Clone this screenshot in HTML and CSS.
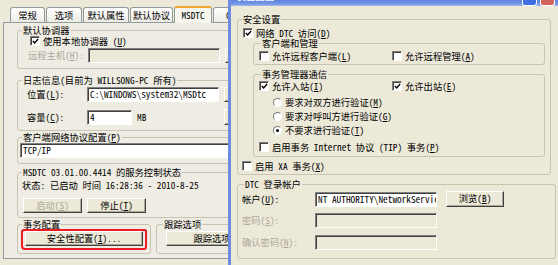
FILE: index.html
```html
<!DOCTYPE html>
<html lang="zh-CN">
<head>
  <meta charset="UTF-8" />
  <title>MSDTC 安全配置</title>
  <link rel="stylesheet" href="styles.css">
</head>
<body>
  <div class="desk">
    <!-- 左边：组件服务属性 / MSDTC 选项卡 -->
    <section class="props">
      <div class="props-in">
        <div class="tabs">
          <span class="tab t1">常规</span>
          <span class="tab t2">选项</span>
          <span class="tab t3">默认属性</span>
          <span class="tab t4">默认协议</span>
          <span class="tab t5 on">MSDTC</span>
          <span class="tab t6">COM</span>
        </div>
        <div class="pane">
          <fieldset class="grp g1">
            <legend>默认协调器</legend>
            <div class="chk chk-local"><i class="box"><svg viewBox="0 0 8 8"><path d="M1 3.5 L3 5.6 L7 1.2"/></svg></i>使用本地协调器 (<u>U</u>)</div>
            <div class="row row-remote">
              <span class="lbl off">远程主机(<u>H</u>):</span>
              <span class="field dis"></span>
              <span class="btn cut"></span>
            </div>
          </fieldset>

          <fieldset class="grp g2">
            <legend>日志信息(目前为 WILLSONG-PC 所有)</legend>
            <div class="row row-path">
              <span class="lbl">位置(<u>L</u>):</span>
              <span class="field">C:\WINDOWS\system32\MSDtc</span>
              <span class="btn cut"></span>
            </div>
            <div class="row row-size">
              <span class="lbl">容量(<u>C</u>):</span>
              <span class="field small">4</span>
              <span class="unit">MB</span>
              <span class="btn cut"></span>
            </div>
          </fieldset>

          <fieldset class="grp g3">
            <legend>客户端网络协议配置(<u>P</u>)</legend>
            <div class="field proto">TCP/IP</div>
          </fieldset>

          <fieldset class="grp g4">
            <legend>MSDTC 03.01.00.4414 的服务控制状态</legend>
            <div class="status">状态: 已启动 时间 16:28:36 - 2010-8-25</div>
            <div class="row row-svc">
              <span class="btn b-start off">启动(<u>S</u>)</span>
              <span class="btn b-stop">停止(<u>T</u>)</span>
            </div>
          </fieldset>

          <div class="pair">
            <fieldset class="grp g5">
              <legend>事务配置</legend>
              <div class="redmark">
                <span class="btn b-sec">安全性配置(<u>I</u>)...</span>
              </div>
            </fieldset>
            <fieldset class="grp g6">
              <legend>跟踪选项</legend>
              <span class="btn b-trace">跟踪选项</span>
            </fieldset>
          </div>
        </div>
      </div>
    </section>

    <!-- 右边：安全配置对话框 -->
    <section class="sec">
      <div class="titlebar">
        <span class="ttl">安全配置</span>
        <span class="cap help"></span>
        <span class="cap close"></span>
      </div>
      <div class="sec-body">
        <fieldset class="grp s1">
          <legend>安全设置</legend>
          <div class="chk chk-net"><i class="box"><svg viewBox="0 0 8 8"><path d="M1 3.5 L3 5.6 L7 1.2"/></svg></i>网络 DTC 访问(<u>D</u>)</div>

          <fieldset class="grp sub s-client">
            <legend>客户端和管理</legend>
            <div class="pairrow">
              <div class="chk col1"><i class="box"></i>允许远程客户端(<u>L</u>)</div>
              <div class="chk"><i class="box"></i>允许远程管理(<u>A</u>)</div>
            </div>
          </fieldset>

          <fieldset class="grp sub s-tm">
            <legend>事务管理器通信</legend>
            <div class="pairrow">
              <div class="chk col1"><i class="box"><svg viewBox="0 0 8 8"><path d="M1 3.5 L3 5.6 L7 1.2"/></svg></i>允许入站(<u>I</u>)</div>
              <div class="chk"><i class="box"><svg viewBox="0 0 8 8"><path d="M1 3.5 L3 5.6 L7 1.2"/></svg></i>允许出站(<u>E</u>)</div>
            </div>
            <div class="radio r1"><i class="dot"></i>要求对双方进行验证(<u>M</u>)</div>
            <div class="radio"><i class="dot"></i>要求对呼叫方进行验证(<u>G</u>)</div>
            <div class="radio"><i class="dot sel"></i>不要求进行验证(<u>T</u>)</div>
            <div class="chk chk-tip"><i class="box"></i>启用事务 Internet 协议 (TIP) 事务(<u>P</u>)</div>
          </fieldset>

          <div class="chk chk-xa"><i class="box"></i>启用 XA 事务(<u>X</u>)</div>
        </fieldset>

        <fieldset class="grp s2">
          <legend>DTC 登录帐户</legend>
          <div class="row acc acc1">
            <span class="lbl">帐户(<u>U</u>):</span>
            <span class="field">NT AUTHORITY\NetworkService</span>
            <span class="btn b-browse">浏览(<u>B</u>)</span>
          </div>
          <div class="row acc acc2">
            <span class="lbl off">密码(<u>S</u>):</span>
            <span class="field dis"></span>
          </div>
          <div class="row acc acc3">
            <span class="lbl off">确认密码(<u>N</u>):</span>
            <span class="field dis"></span>
          </div>
        </fieldset>
      </div>
    </section>
  </div>
</body>
</html>
```

FILE: styles.css
```css
* {
  box-sizing: border-box;
}
html, body {
  margin: 0;
}
body {
  width: 558px;
  height: 265px;
  overflow: hidden;
  background: #ece9d8;
  color: #000;
  font-family: "Noto Sans Mono CJK SC", "Noto Sans CJK SC", sans-serif;
  font-size: 9.3px;
  line-height: 11px;
}
u {
  text-decoration: underline;
  text-underline-offset: 1px;
}
.desk {
  display: flex;
  height: 265px;
}

/* ---------- 左边属性页 ---------- */
.props {
  width: 228px;
  flex: none;
  overflow: hidden;
  padding-left: 3px;
}
.props-in {
  width: 270px;
}
.tabs {
  display: flex;
  align-items: flex-end;
  height: 22px;
  padding-left: 7px;
}
.tab {
  flex: none;
  height: 15px;
  margin-right: 1px;
  border: 1px solid #919b9c;
  border-bottom: none;
  border-radius: 3px 3px 0 0;
  background: linear-gradient(#ffffff, #ecebe4);
  text-align: center;
  line-height: 14px;
}
.tab.on {
  height: 17px;
  border-top: 2px solid #f5a632;
  background: #f6f5ee;
  position: relative;
  z-index: 1;
  margin-bottom: -1px;
}
.t1 { width: 35px; }
.t2 { width: 36px; }
.t3 { width: 46px; }
.t4 { width: 43px; }
.t5 { width: 38px; }
.t6 { width: 40px; }

.pane {
  height: 237px;
  border: 1px solid #919b9c;
  background: #efede3;
  padding: 2px 0 0 13px;
}

/* 分组框 */
.grp {
  margin: 0;
  padding: 0;
  min-width: 0;
  border: 1px solid #c7c4b3;
  border-radius: 3px;
}
.grp legend {
  margin-left: 4px;
  padding: 0 1px;
  line-height: 11px;
}
.g1 { height: 44px; }
.g2 { height: 56px; margin-top: 6px; }
.g3 { height: 32px; margin-top: 1px; }
.g4 { height: 51px; margin-top: 3px; }
.pair {
  display: flex;
  margin-top: 1px;
}
.g5 {
  flex: none;
  width: 134px;
  height: 35px;
}
.g6 {
  flex: none;
  width: 120px;
  height: 35px;
  margin-left: 5px;
}
.g6 legend {
  margin-left: 6px;
}

.row {
  display: flex;
  align-items: center;
}
.lbl {
  flex: none;
}
.off {
  color: #aca899;
}
.field {
  display: block;
  flex: none;
  height: 15px;
  background: #fff;
  border: 1px solid;
  border-color: #808080 #fff #fff #808080;
  box-shadow: inset 1px 1px #404040;
  padding: 1px 0 0 2px;
  white-space: nowrap;
  overflow: hidden;
}
.field.dis {
  background: #ece9d8;
}
.btn {
  display: block;
  flex: none;
  height: 16px;
  background: #ece9d8;
  border: 1px solid;
  border-color: #fff #404040 #404040 #fff;
  box-shadow: inset -1px -1px #aca899;
  text-align: center;
  line-height: 13px;
  white-space: nowrap;
}
.btn.cut {
  width: 30px;
  margin-left: 5px;
}

.chk {
  display: flex;
  align-items: center;
  height: 10px;
  white-space: nowrap;
}
.box {
  flex: none;
  width: 10px;
  height: 10px;
  margin-right: 3px;
  background: #fff;
  border: 1px solid;
  border-color: #808080 #fff #fff #808080;
  box-shadow: inset 1px 1px #404040;
  display: flex;
  align-items: center;
  justify-content: center;
}
.box svg {
  width: 7px;
  height: 7px;
  margin: 1px 0 0 1px;
}
.box path {
  fill: none;
  stroke: #000;
  stroke-width: 1.6;
}
.chk-local {
  margin-left: 12px;
}
.row-remote {
  margin: 2px 0 0 10px;
}
.row-remote .lbl,
.row-path .lbl,
.row-size .lbl {
  width: 60px;
}
.row-remote .field,
.row-path .field {
  width: 132px;
}
.row-remote .btn,
.row-path .btn {
  height: 15px;
}
.row-path {
  margin: 1px 0 0 9px;
}
.row-size {
  margin: 7px 0 0 9px;
}
.field.small {
  width: 45px;
}
.unit {
  width: 87px;
  padding-left: 5px;
}
.row-size .btn {
  margin-left: 5px;
}
.proto {
  margin-left: 2px;
}
.status {
  margin: 2px 0 0 4px;
  white-space: nowrap;
}
.row-svc {
  margin: 7px 0 0 5px;
  gap: 5px;
}
.b-start,
.b-stop {
  width: 59px;
  height: 15px;
}
/* 手画的红框标记 */
.redmark {
  width: 126px;
  height: 21px;
  margin: -1px 0 0 3px;
  padding: 0 2px 0 2px;
  border: 2px solid #ec1c24;
  border-radius: 3px 2px 3px 4px;
}
.b-sec {
  width: 118px;
  height: 15px;
}
.b-trace {
  width: 92px;
  height: 15px;
  margin: 1px 0 0 9px;
}

/* ---------- 右边安全配置对话框 ---------- */
.sec {
  flex: 1;
  min-width: 0;
  border-left: 3px solid #6a8de0;
  overflow: hidden;
}
.titlebar {
  display: flex;
  align-items: flex-end;
  height: 6px;
  overflow: hidden;
  background: linear-gradient(#5d82de, #7899e6 70%, #a8bcef);
}
.ttl {
  color: #e8eefc;
  font-weight: bold;
  margin: 0 0 4px 6px;
  line-height: 11px;
}
.cap {
  flex: none;
  width: 15px;
  height: 6px;
  border: 1px solid #fff;
  border-top: none;
  border-radius: 0 0 3px 3px;
}
.help {
  margin-left: auto;
  margin-right: 3px;
  background: #3f6fe3;
}
.close {
  margin-right: 3px;
  background: #d0635a;
}
.sec-body {
  padding-left: 6px;
}
.s1 {
  width: 314px;
  height: 161px;
  margin-top: 8px;
}
.chk-net {
  margin: 3px 0 0 5px;
}
.sub {
  width: 292px;
  margin-left: 15px;
}
.sub legend {
  margin-left: 7px;
}
.s-client {
  height: 27px;
}
.pairrow {
  display: flex;
  margin: 2px 0 0 5px;
}
.col1 {
  width: 133px;
}
.s-tm {
  height: 88px;
  margin-top: 4px;
}
.s-tm .pairrow {
  margin-top: 1px;
}
.radio {
  display: flex;
  align-items: center;
  height: 11px;
  margin: 3px 0 0 19px;
}
.radio.r1 {
  margin-top: 6px;
}
.dot {
  flex: none;
  width: 9px;
  height: 9px;
  margin-right: 3px;
  border-radius: 50%;
  background: #fff;
  border: 1px solid;
  border-color: #808080 #fff #fff #808080;
  display: flex;
  align-items: center;
  justify-content: center;
}
.dot.sel::after {
  content: "";
  width: 3px;
  height: 3px;
  border-radius: 50%;
  background: #000;
}
.chk-tip {
  margin: 6px 0 0 5px;
}
.chk-xa {
  margin: 4px 0 0 4px;
}
.s2 {
  width: 319px;
  height: 80px;
  margin-top: 4px;
}
.s2 legend {
  margin-left: 6px;
}
.acc {
  margin-left: 4px;
}
.acc .lbl {
  width: 73px;
}
.acc .field {
  width: 122px;
}
.acc1 {
  margin-top: 1px;
}
.b-browse {
  width: 58px;
  margin-left: 9px;
}
.acc2 {
  margin-top: 6px;
}
.acc3 {
  margin-top: 7px;
}
```
